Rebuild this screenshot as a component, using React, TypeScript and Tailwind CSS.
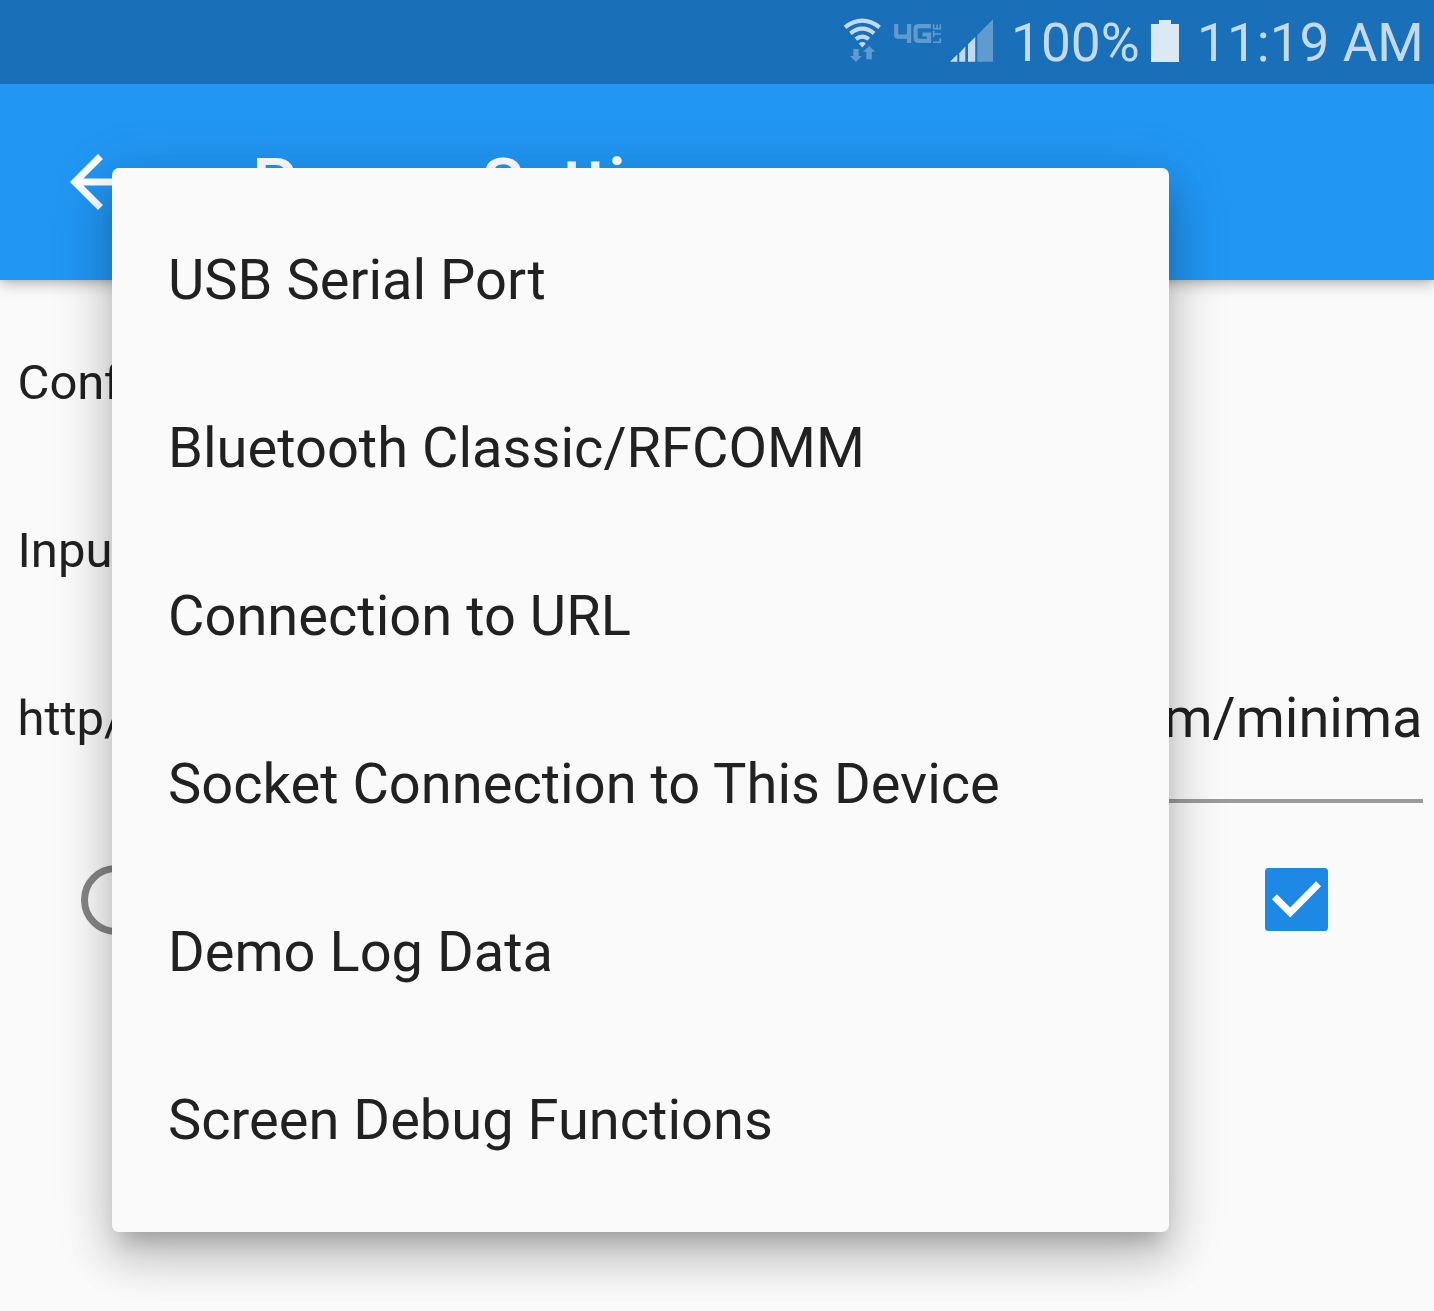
import React from "react";

const options = [
  "USB Serial Port",
  "Bluetooth Classic/RFCOMM",
  "Connection to URL",
  "Socket Connection to This Device",
  "Demo Log Data",
  "Screen Debug Functions",
];

function StatusIcons() {
  return (
    <svg className="h-[84px] w-[166px] shrink-0" viewBox="834 0 166 84">
      <g fill="none" stroke="#c3daed" strokeWidth="4.2">
        <path d="M845 27.3 Q862.3 14 879.6 27.3" />
        <path d="M850.5 33.3 Q862.3 24 874.1 33.3" />
        <path d="M855.8 39.2 Q862.3 34 868.8 39.2" />
      </g>
      <path d="M858.8 43.5 Q862.3 40.6 865.8 43.5 L862.3 47.4Z" fill="#c3daed" />
      <g fill="#5f9bcf">
        <path d="M853.3 49h5.4v7h3.1L856 62l-6-6h3.3Z" />
        <path d="M866.3 59.2v-7.5h-3.3L869.2 46l6 5.7h-3.4v7.5Z" />
        <path d="M977.3 35 993 19.2V61.8H977.3Z" />
      </g>
      <g fill="none" stroke="#5f9bcf" strokeWidth="4.2">
        <path d="M896.2 24V35.1Q896.2 36.7 898 36.7H909.5M909.1 24V43" />
        <path d="M931 26.1H919Q915.6 26.1 915.6 29V38Q915.6 40.9 919 40.9H929V34.5H922.5" />
      </g>
      <g fill="none" stroke="#5f9bcf" strokeWidth="1.6">
        <path d="M933 42.3H940.3V38.2" />
        <path d="M933.7 31V37M933.7 34H941" />
        <path d="M933.7 24.2V28.7H940.3V24.2M937 24.7V28.7" />
      </g>
      <g fill="#c3daed">
        <path d="M950 61.8 957.3 54.6V61.8Z" />
        <path d="M959.3 61.8V53.3L965.3 46.6V61.8Z" />
        <path d="M968 61.8V44.2L975.2 37V61.8Z" />
      </g>
    </svg>
  );
}

function StatusBar() {
  return (
    <div className="relative z-10 flex h-[84px] items-center bg-[#1a70b8] pl-[834px] text-[53.2px] leading-[84px] text-[#c3daed]">
      <StatusIcons />
      <span className="ml-[11px] w-[130px] pt-[2px] whitespace-nowrap">100%</span>
      <svg className="mb-[2px] ml-[10px] h-[42px] w-7 shrink-0" viewBox="0 0 28 42">
        <path d="M0 4H8V0H20V4H28V42H0Z" fill="#dbe9f4" />
      </svg>
      <span className="ml-[18px] pt-[2px] whitespace-nowrap">11:19 AM</span>
    </div>
  );
}

function AppBar() {
  return (
    <header className="relative flex h-[196px] items-center bg-[#2196f3] text-white shadow-[0_4px_14px_rgba(0,0,0,0.25),0_1px_5px_rgba(0,0,0,0.1)]">
      <svg className="ml-14 h-[84px] w-[84px] shrink-0" viewBox="0 0 24 24" fill="currentColor">
        <path d="M20 11H7.83l5.59-5.59L12 4l-8 8 8 8 1.41-1.41L7.83 13H20v-2z" />
      </svg>
      <h1 className="ml-[112px] pt-[4px] text-[70px] font-medium whitespace-nowrap [word-spacing:7px]">Parser Settings</h1>
    </header>
  );
}

function Page() {
  return (
    <main className="pt-[19px] pl-[17.5px] text-[49px]">
      <div className="flex h-[168px] items-center">Configuration</div>
      <div className="flex h-[168px] items-center">Input</div>
      <div className="flex h-[168px] items-center justify-between pr-[11.5px]">
        <span>http/</span>
        <div className="flex h-[168px] w-[400px] flex-col">
          <div className="flex h-[164px] items-center justify-end pt-px text-[56px] whitespace-nowrap">.com/minima</div>
          <div className="h-[4px] shrink-0 bg-[#9b9b9b]" />
        </div>
      </div>
      <div className="flex h-[193px] items-center justify-between pr-[106px] pl-[63px]">
        <div className="h-[70px] w-[70px] rounded-full border-[7px] border-[#868686]" />
        <svg className="h-[63px] w-[63px]" viewBox="3 3 18 18">
          <rect x="3" y="3" width="18" height="18" rx="1" fill="#1e88e5" />
          <path d="M5.7 11.2 10.2 15.7 18.3 7.5" fill="none" stroke="#fff" strokeWidth="2" />
        </svg>
      </div>
    </main>
  );
}

function SourceMenu() {
  return (
    <ul className="absolute top-[168px] left-[112px] h-[1064px] w-[1057px] rounded-[7px] bg-[#fafafa] py-7 shadow-[0_17.5px_20px_-10.5px_rgba(0,0,0,0.2),0_28px_41px_3.5px_rgba(0,0,0,0.14),0_10.5px_57px_7px_rgba(0,0,0,0.12)]">
      {options.map((label) => (
        <li key={label} className="flex h-[168px] items-center pl-14 text-[56px] tracking-[0.02px] whitespace-nowrap">
          {label}
        </li>
      ))}
    </ul>
  );
}

export default function App() {
  return (
    <div className="relative h-[1311px] w-[1434px] overflow-hidden bg-[#fafafa] font-['Roboto',sans-serif] text-[#212121]">
      <StatusBar />
      <AppBar />
      <Page />
      <SourceMenu />
    </div>
  );
}
